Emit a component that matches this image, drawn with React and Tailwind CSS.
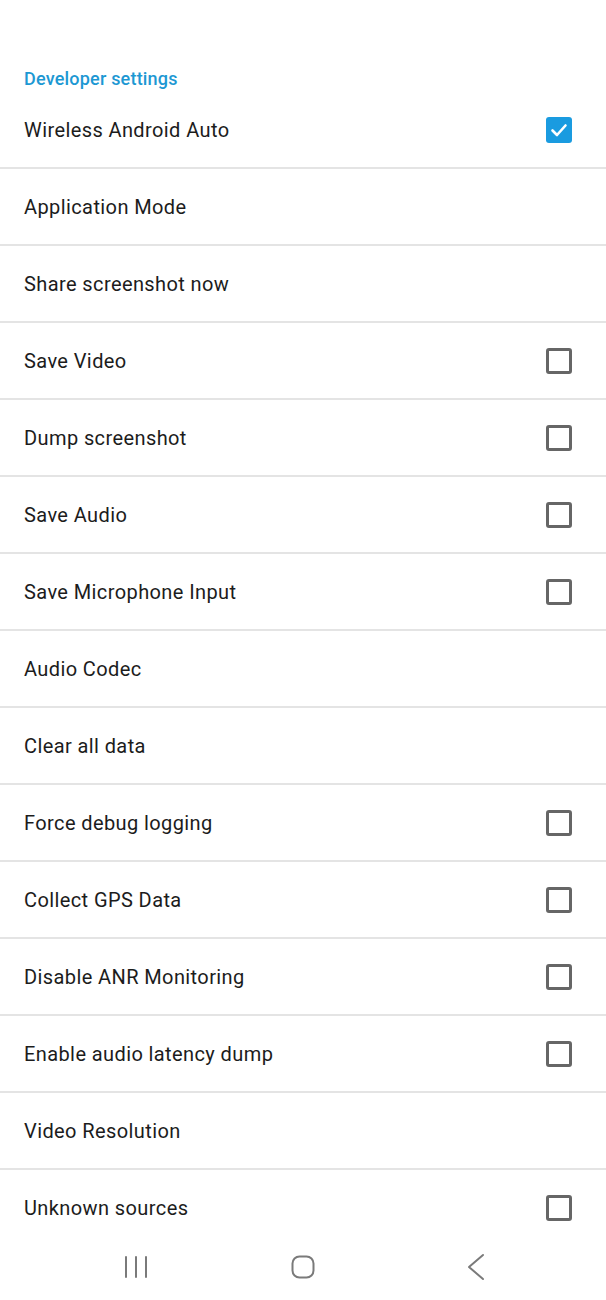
const rows = [
  { label: 'Wireless Android Auto', check: true, checked: true },
  { label: 'Application Mode' },
  { label: 'Share screenshot now' },
  { label: 'Save Video', check: true },
  { label: 'Dump screenshot', check: true },
  { label: 'Save Audio', check: true },
  { label: 'Save Microphone Input', check: true },
  { label: 'Audio Codec' },
  { label: 'Clear all data' },
  { label: 'Force debug logging', check: true },
  { label: 'Collect GPS Data', check: true },
  { label: 'Disable ANR Monitoring', check: true },
  { label: 'Enable audio latency dump', check: true },
  { label: 'Video Resolution' },
  { label: 'Unknown sources', check: true },
]

function Checkbox({ checked }) {
  if (checked) {
    return (
      <div className="w-[26px] h-[26px] rounded-[3px] bg-[#1a9be0] flex items-center justify-center">
        <svg width="20" height="20" viewBox="0 0 20 20" fill="none">
          <path d="M3.5 10.5 L8 15 L16.5 5.5" stroke="white" strokeWidth="2.6" strokeLinecap="round" strokeLinejoin="round" />
        </svg>
      </div>
    )
  }
  return <div className="w-[26px] h-[26px] rounded-[3px] border-[3px] border-[#666666] bg-white" />
}

function NavBar() {
  return (
    <div className="fixed bottom-0 left-0 right-0 h-[66px] bg-white flex items-center">
      <div className="w-full flex items-center">
        <div className="w-[202px] flex justify-end pr-[53px]">
          <svg width="26" height="24" viewBox="0 0 26 24" fill="none">
            <path d="M3 2 V22 M13 2 V22 M23 2 V22" stroke="#7a7a7a" strokeWidth="2" strokeLinecap="round" />
          </svg>
        </div>
        <div className="flex-1 flex justify-center">
          <svg width="24" height="24" viewBox="0 0 24 24" fill="none">
            <rect x="1.5" y="1.5" width="21" height="21" rx="7" stroke="#7a7a7a" strokeWidth="2" />
          </svg>
        </div>
        <div className="w-[202px] flex justify-start pl-[62px]">
          <svg width="20" height="28" viewBox="0 0 20 28" fill="none">
            <path d="M17 2 L3 14 L17 26" stroke="#7a7a7a" strokeWidth="2" strokeLinecap="round" strokeLinejoin="round" />
          </svg>
        </div>
      </div>
    </div>
  )
}

export default function App() {
  return (
    <div className="min-h-[1300px] bg-white font-['Roboto','Noto_Sans',sans-serif] text-[#1c1c1c]">
      <div className="pt-[64px]">
        <div className="h-[28px] flex items-center px-6 text-[18px] tracking-[0.2px] font-medium text-[#1d98d3]">
          Developer settings
        </div>
        {rows.map((r, i) => (
          <div key={i} className="h-[77px] flex items-center justify-between pl-6 pr-[34px] border-b-2 border-[#e4e4e4]">
            <span className="text-[20px] tracking-[0.4px] pt-px">{r.label}</span>
            {r.check && <Checkbox checked={r.checked} />}
          </div>
        ))}
      </div>
      <NavBar />
    </div>
  )
}
